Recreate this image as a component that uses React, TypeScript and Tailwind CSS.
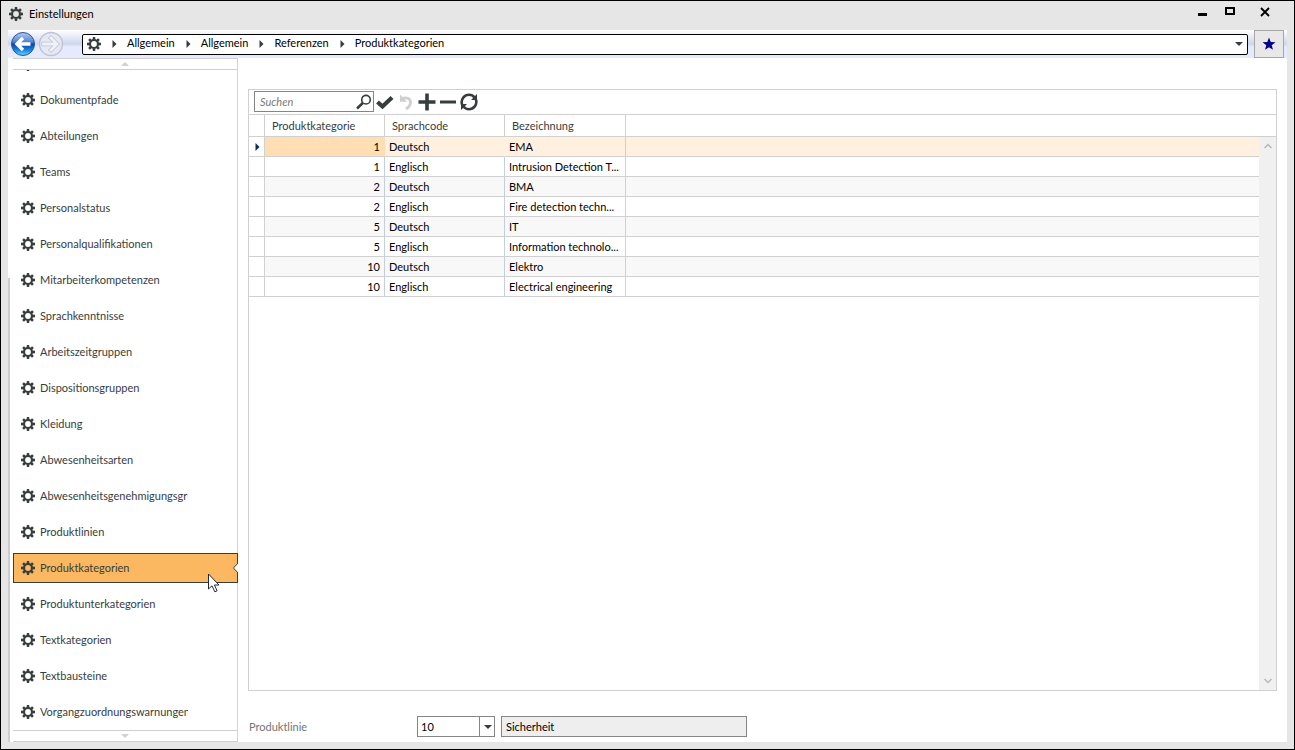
import type { ReactNode } from "react";
import { clsx } from "clsx";

const navItems = [
    "Dokumentpfade",
    "Abteilungen",
    "Teams",
    "Personalstatus",
    "Personalqualifikationen",
    "Mitarbeiterkompetenzen",
    "Sprachkenntnisse",
    "Arbeitszeitgruppen",
    "Dispositionsgruppen",
    "Kleidung",
    "Abwesenheitsarten",
    "Abwesenheitsgenehmigungsgruppen",
    "Produktlinien",
    "Produktkategorien",
    "Produktunterkategorien",
    "Textkategorien",
    "Textbausteine",
    "Vorgangzuordnungswarnungen",
];

const rows = [
    { id: 1, lang: "Deutsch", name: "EMA" },
    { id: 1, lang: "Englisch", name: "Intrusion Detection T..." },
    { id: 2, lang: "Deutsch", name: "BMA" },
    { id: 2, lang: "Englisch", name: "Fire detection techn..." },
    { id: 5, lang: "Deutsch", name: "IT" },
    { id: 5, lang: "Englisch", name: "Information technolo..." },
    { id: 10, lang: "Deutsch", name: "Elektro" },
    { id: 10, lang: "Englisch", name: "Electrical engineering" },
];

const crumbs = ["Allgemein", "Allgemein", "Referenzen", "Produktkategorien"];

const Gear = () => (
    <svg viewBox="0 0 14 14" className="size-[14px] shrink-0" fill="#373d3d">
        {[0, 45, 90, 135, 180, 225, 270, 315].map((angle) => (
            <path key={angle} d="M5.8 0h2.4l.2 3h-2.8z" transform={`rotate(${angle} 7 7)`} />
        ))}
        <circle cx="7" cy="7" r="3.9" fill="none" stroke="#373d3d" strokeWidth="2" />
    </svg>
);

const Arrow = ({ dir, className }: { dir: "up" | "down" | "right"; className: string }) => {
    const d = { up: "M0 4l4-4 4 4z", down: "M0 0h8l-4 4z", right: "M0 0l4 4-4 4z" }[dir];
    return (
        <svg viewBox={dir === "right" ? "0 0 4 8" : "0 0 8 4"} className={clsx("shrink-0", className)} fill="currentColor">
            <path d={d} />
        </svg>
    );
};

const RoundArrow = ({ active }: { active?: boolean }) => {
    const arrow = "M20.5 13H8.500M13 7L7 13l6 6";
    return (
        <svg viewBox="0 0 26 26" className="size-[26px]" fill="none">
            <defs>
                <linearGradient id="ball" x1="0" y1="0" x2="0" y2="1">
                    <stop offset="0" stopColor="#b4caee" />
                    <stop offset="0.42" stopColor="#4f82d0" />
                    <stop offset="0.5" stopColor="#0c46a4" />
                    <stop offset="0.75" stopColor="#1a7fdc" />
                    <stop offset="1" stopColor="#5fdcff" />
                </linearGradient>
            </defs>
            <circle cx="13" cy="13" r="11.5" fill={active ? "url(#ball)" : "#e6e8f3"} stroke={active ? "#2c559c" : "#bfc4d4"} strokeWidth={active ? 1 : 1.4} />
            {active ? (
                <path d={arrow} stroke="#fff" strokeWidth="3.400" />
            ) : (
                <g transform="rotate(180 13 13)">
                    <path d={arrow} stroke="#bfc3d0" strokeWidth="4.400" strokeLinecap="square" />
                    <path d={arrow} stroke="#f0f2f9" strokeWidth="2.800" strokeLinecap="square" />
                </g>
            )}
        </svg>
    );
};

const ToolButton = ({ label, children }: { label: string; children: ReactNode }) => (
    <button type="button" aria-label={label} className="flex size-[21px] items-center justify-center">
        <svg viewBox="0 0 18 18" className="size-[18px]" fill="none" stroke="#373d3d">
            {children}
        </svg>
    </button>
);

const TitleBar = () => (
    <header className="flex h-[29px] shrink-0 items-center pr-[21px] pb-1 pl-2">
        <Gear />
        <h1 className="ml-1.5 flex-1 text-black">Einstellungen</h1>
        <div className="mb-1 flex gap-4 text-black">
            <button type="button" aria-label="Minimieren" className="size-4">
                <svg viewBox="0 0 16 16" fill="currentColor">
                    <path d="M5 9h9v3H5z" />
                </svg>
            </button>
            <button type="button" aria-label="Maximieren" className="size-3">
                <svg viewBox="0 0 12 12" fill="none" stroke="currentColor" strokeWidth="2" className="mt-0.5">
                    <path d="M1 2h8v6H1z" />
                </svg>
            </button>
            <button type="button" aria-label="Schließen" className="ml-1 size-4">
                <svg viewBox="0 0 16 16" fill="none" stroke="currentColor" strokeWidth="1.800">
                    <path d="M4 4l8 8M12 4l-8 8" />
                </svg>
            </button>
        </div>
    </header>
);

const AddressBar = () => (
    <div className="flex h-7 shrink-0 items-center bg-linear-to-b from-white from-0% via-[#cdd6ec] via-50% to-[#e6eaff] to-60% pr-[3px] pl-0.5">
        <button type="button" aria-label="Zurück">
            <RoundArrow active />
        </button>
        <button type="button" aria-label="Vorwärts" className="ml-0.5">
            <RoundArrow />
        </button>
        <nav className="ml-[18px] flex h-[21px] flex-1 items-center rounded-xs border border-black bg-white pr-1 pl-1 text-black">
            <Gear />
            {crumbs.map((crumb, index) => (
                <span key={index} className="flex items-center">
                    <Arrow dir="right" className="mr-[10px] ml-[11px] h-2 w-[5px] text-[#373d3d]" />
                    <a href="#" className="pb-0.5">
                        {crumb}
                    </a>
                </span>
            ))}
            <button type="button" aria-label="Verlauf" className="ml-auto">
                <Arrow dir="down" className="h-1 w-2 text-[#373d3d]" />
            </button>
        </nav>
        <button type="button" aria-label="Favorit" className="ml-1.5 flex h-7 w-[30px] items-center justify-center border border-[#a6a6a6] bg-[#e8e8e8]">
            <svg viewBox="0 0 14 14" className="size-[14px]" fill="#00008b">
                <path d="M7 0.6l1.7 4.4 4.8.2-3.8 3 1.3 4.6L7 10.200l-4 2.600 1.300-4.600-3.800-3 4.800-.2z" />
            </svg>
        </button>
    </div>
);

const Cursor = () => (
    <svg viewBox="0 0 12 20" className="absolute top-5 left-[195px] h-5 w-3" fill="#fff" stroke="#222a3a" strokeWidth="1">
        <path d="M.5 1v15l3.500-3.200 2.800 6 2.300-1-2.700-5.800h4.600z" />
    </svg>
);

const Sidebar = () => (
    <aside className="flex w-[230px] shrink-0">
        <div className="mt-[220px] w-0.5 bg-[#cdcdcd]" />
        <div className="ml-[3px] flex min-w-0 flex-1 flex-col border-r border-[#d4d4d4]">
            <button type="button" aria-label="Nach oben" className="flex h-3 shrink-0 items-center justify-center border-y border-[#cfcfcf]">
                <Arrow dir="up" className="h-1 w-2 text-[#d0d0d0]" />
            </button>
            <ul className="-mr-px flex min-h-0 flex-1 flex-col gap-1.5 overflow-hidden">
                <li className="-mt-[21px] flex h-[30px] shrink-0 items-center pl-2">
                    <Gear />
                </li>
                {navItems.map((item) => {
                    const active = item === "Produktkategorien";
                    return (
                        <li key={item} className="relative h-[30px] shrink-0">
                            <a href="#" className={clsx("flex h-full items-center border pl-[7px]", active ? "border-[#373d3d] bg-[#fbb860]" : "border-transparent")}>
                                <Gear />
                                <span className="ml-[5px] w-[148px] overflow-hidden whitespace-nowrap">{item}</span>
                            </a>
                            {active && (
                                <svg viewBox="0 0 5 10" className="absolute top-[10px] right-0 h-[10px] w-[5px]" fill="#fff">
                                    <path d="M5 0L.5 5 5 10" stroke="#373d3d" />
                                </svg>
                            )}
                            {active && <Cursor />}
                        </li>
                    );
                })}
            </ul>
            <button type="button" aria-label="Nach unten" className="flex h-3 shrink-0 items-center justify-center border-y border-[#cfcfcf]">
                <Arrow dir="down" className="h-1 w-2 text-[#d0d0d0]" />
            </button>
        </div>
    </aside>
);

const Toolbar = () => (
    <div className="flex h-[25px] shrink-0 items-center border-b border-[#d0d0d0] pb-px pl-[5px]">
        <label className="flex h-[21px] w-[120px] items-center border border-[#858585] bg-white pr-px pl-[5px]">
            <input type="search" aria-label="Suchen" placeholder="Suchen" className="min-w-0 flex-1 italic outline-none placeholder:text-[#7a7a7a]" />
            <svg viewBox="0 0 16 16" className="size-4" fill="none" stroke="#373d3d">
                <circle cx="10" cy="5.700" r="4.300" strokeWidth="1.600" />
                <path d="M6.800 9L1 14.500" strokeWidth="2.600" />
            </svg>
        </label>
        <ToolButton label="Speichern">
            <path d="M1.500 9l5 4.500L16 4.500" strokeWidth="4.200" />
        </ToolButton>
        <ToolButton label="Rückgängig">
            <path d="M5 6c4-2.500 8.500-.5 8.500 3.200 0 2.800-1.500 4.800-4.500 6.800" stroke="#cfcfcf" strokeWidth="2.800" />
            <path d="M3 1.500v7.300h7z" fill="#cfcfcf" stroke="none" />
        </ToolButton>
        <ToolButton label="Hinzufügen">
            <path d="M9 0.500v17M.5 9h17" strokeWidth="3.600" />
        </ToolButton>
        <ToolButton label="Entfernen">
            <path d="M1 9h16" strokeWidth="3" />
        </ToolButton>
        <ToolButton label="Aktualisieren">
            <path d="M2 11.500C.5 6 4.500 1.800 9 1.800c2.500 0 4.300 1 5.500 2.800M16 6.500c1.500 5.500-2.500 9.700-7 9.700-2.500 0-4.300-1-5.500-2.800" strokeWidth="2.600" />
            <path d="M17 1v6h-6zM1 17v-6h6z" fill="#373d3d" stroke="none" />
        </ToolButton>
    </div>
);

const CategoryTable = () => (
    <section className="flex min-h-0 flex-1 flex-col border border-[#d0d0d0]">
        <Toolbar />
        <div className="flex min-h-0 flex-1">
            <div className="min-w-0 flex-1 overflow-hidden">
                <table className="w-full table-fixed border-separate border-spacing-0 text-black">
                    <colgroup>
                        <col className="w-4" />
                        <col className="w-[120px]" />
                        <col className="w-[120px]" />
                        <col className="w-[121px]" />
                        <col />
                    </colgroup>
                    <thead>
                        <tr className="h-[22px] text-left text-[#373d3d]">
                            <td className="border-r border-b border-[#d0d0d0]" />
                            {["Produktkategorie", "Sprachcode", "Bezeichnung"].map((title) => (
                                <th key={title} scope="col" className="border-r border-b border-[#d0d0d0] pl-[7px] font-normal">
                                    {title}
                                </th>
                            ))}
                            <td className="border-b border-[#d0d0d0]" />
                        </tr>
                    </thead>
                    <tbody>
                        {rows.map((row, index) => {
                            const selected = index === 0;
                            const line = selected ? "border-r-transparent" : "border-r-[#c3d0da]";
                            return (
                                <tr key={index} className={clsx("h-5", selected ? "bg-[#fff0e0]" : index % 2 === 0 ? "bg-[#f8f8f8]" : "bg-white")}>
                                    <td className="border-r border-b border-[#d0d0d0] bg-white">{selected && <Arrow dir="right" className="ml-1.5 h-2 w-[5px] text-[#0a2a66]" />}</td>
                                    <td className={clsx("border-r border-b border-b-[#d0d0d0] pr-1 text-right", line, selected && "bg-[#ffdeb3]")}>{row.id}</td>
                                    <td className={clsx("border-r border-b border-b-[#d0d0d0] pl-1", line)}>{row.lang}</td>
                                    <td className="border-r border-b border-[#d0d0d0] pl-1 whitespace-nowrap">{row.name}</td>
                                    <td className="border-b border-[#d0d0d0]" />
                                </tr>
                            );
                        })}
                    </tbody>
                </table>
            </div>
            <div className="flex w-[17px] flex-col">
                <div className="h-[22px] border-b border-[#d0d0d0]" />
                <div className="flex flex-1 flex-col items-center justify-between bg-[#f0f0f0] py-1.5">
                    <svg viewBox="0 0 8 6" className="h-1.5 w-2" fill="none" stroke="#b8b8b8" strokeWidth="1.500">
                        <path d="M.5 5L4 1.500 7.500 5" />
                    </svg>
                    <svg viewBox="0 0 8 6" className="h-1.5 w-2" fill="none" stroke="#b8b8b8" strokeWidth="1.500">
                        <path d="M.5 1L4 4.500 7.500 1" />
                    </svg>
                </div>
            </div>
        </div>
    </section>
);

const DetailForm = () => (
    <form className="flex h-[21px] shrink-0 items-center pl-px">
        <label htmlFor="line" className="w-[168px] text-[#757575]">
            Produktlinie
        </label>
        <div className="relative h-full w-[78px] text-black">
            <select id="line" defaultValue="10" className="h-full w-full appearance-none border border-[#858585] bg-white pl-[3px]">
                <option>10</option>
            </select>
            <span className="pointer-events-none absolute inset-y-0 right-0 flex w-4 items-center justify-center border-l border-[#858585]">
                <Arrow dir="down" className="h-1 w-2 text-[#373d3d]" />
            </span>
        </div>
        <input type="text" readOnly aria-label="Bezeichnung der Produktlinie" value="Sicherheit" className="ml-1.5 h-full w-[246px] border border-[#858585] bg-[#eeeeee] pl-1 text-black" />
    </form>
);

const App = () => {
    return (
        <div className="flex h-screen flex-col border border-black bg-[#e6e6e6] font-['Lato',sans-serif] text-[11px] leading-4 text-[#373d3d]">
            <TitleBar />
            <div className="mx-[7px] mb-[7px] flex min-h-0 flex-1 flex-col bg-white">
                <AddressBar />
                <div className="flex min-h-0 flex-1">
                    <Sidebar />
                    <main className="flex min-w-0 flex-1 flex-col gap-[25px] pt-[31px] pr-[10px] pb-[5px] pl-[10px]">
                        <CategoryTable />
                        <DetailForm />
                    </main>
                </div>
            </div>
        </div>
    );
};

export default App;
